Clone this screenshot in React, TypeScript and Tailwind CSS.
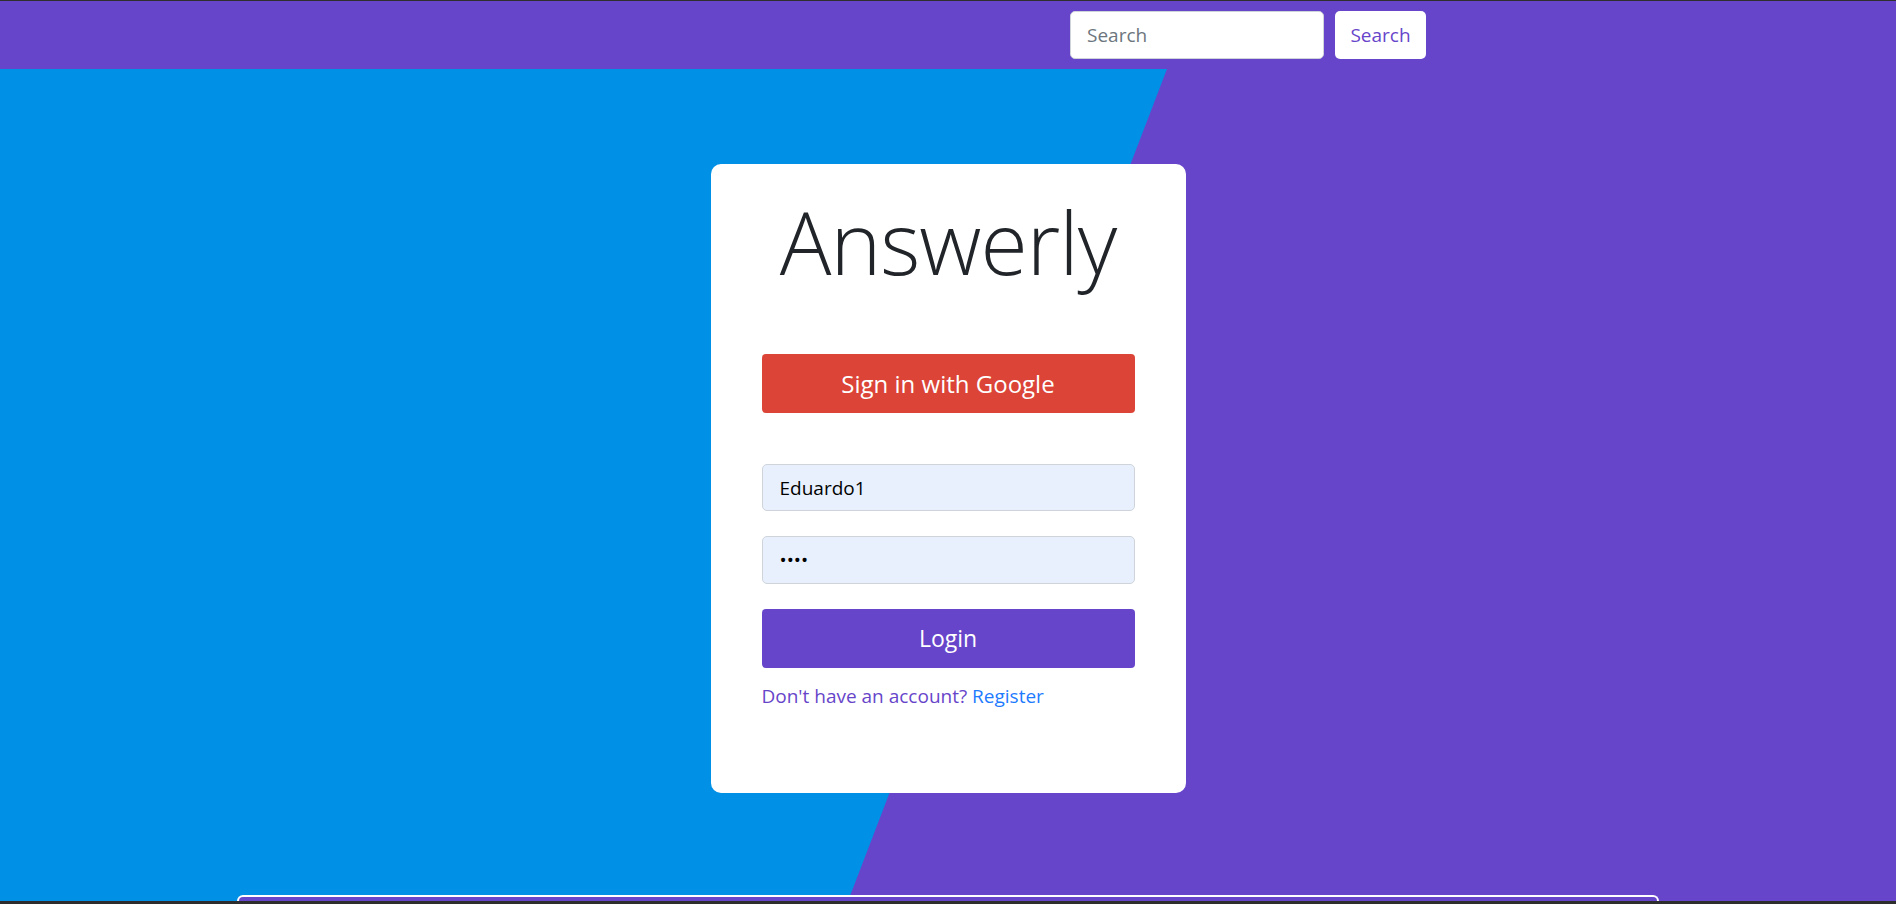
const App = () => {
    return (
        <div className="h-screen w-full flex flex-col overflow-hidden font-['Open_Sans',sans-serif]">
            <nav className="h-[69px] border-t border-[#2f2f2f] bg-[#6745ca] flex items-center justify-end pr-[470px] gap-[11px]">
                <input
                    className="w-[254px] h-[48px] bg-white rounded-[5px] border border-[#ced4da] px-[16px] text-[19px] text-[#495057] placeholder:text-[#6c757d] outline-none"
                    type="text"
                    placeholder="Search"
                />
                <button className="w-[91px] h-[48px] bg-white rounded-[5px] text-[19px] text-[#6745ca]">Search</button>
            </nav>
            <main className="flex-1 relative bg-[#0091e6] flex flex-col items-center">
                <div className="absolute inset-0 bg-[#6745ca] [clip-path:polygon(61.55%_0,100%_0,100%_100%,44.73%_100%)]" />
                <div className="relative mt-[95px] w-[475px] h-[629px] bg-white rounded-[10px] px-[51px] pt-[26px] flex flex-col">
                    <h1 className="text-center text-[86px] font-light leading-[1.2] text-[#212529] tracking-[-1px]">Answerly</h1>
                    <button className="mt-[61px] h-[59px] w-full rounded-[4px] bg-[#db4437] text-white text-[24px]">Sign in with Google</button>
                    <input
                        className="mt-[51px] h-[47px] w-full rounded-[5px] border border-[#ced4da] bg-[#e8f0fe] px-[17px] text-[19px] text-black outline-none"
                        type="text"
                        defaultValue="Eduardo1"
                        readOnly
                    />
                    <input
                        className="mt-[25px] h-[48px] w-full rounded-[5px] border border-[#ced4da] bg-[#e8f0fe] px-[17px] text-[19px] text-black outline-none"
                        type="password"
                        defaultValue="1234"
                        readOnly
                    />
                    <button className="mt-[25px] h-[59px] w-full rounded-[4px] bg-[#6745ca] text-white text-[23px]">Login</button>
                    <p className="mt-[14px] text-[19px] text-[#6745ca]">
                        Don't have an account? <a className="text-[#1e7bff]" href="#">Register</a>
                    </p>
                </div>
                <div className="relative mt-auto w-[1422px] h-[6px] rounded-t-[10px] border-2 border-b-0 border-white bg-[#6745ca]" />
            </main>
            <div className="h-[3px] bg-[#2d2d2d]" />
        </div>
    )
}

export default App
